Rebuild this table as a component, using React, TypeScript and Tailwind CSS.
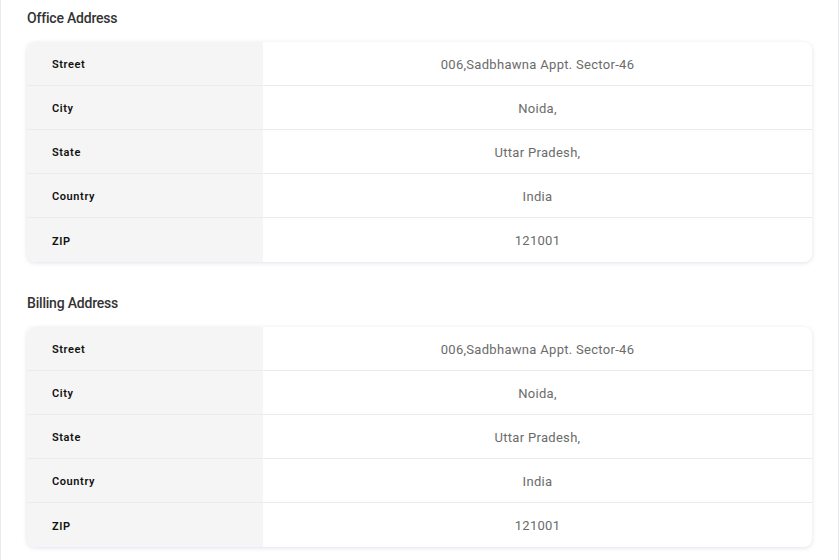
const rows = [
  { label: "Street", value: "006,Sadbhawna Appt. Sector-46" },
  { label: "City", value: "Noida," },
  { label: "State", value: "Uttar Pradesh," },
  { label: "Country", value: "India" },
  { label: "ZIP", value: "121001" },
]

function AddressCard({ title }: { title: string }) {
  return (
    <section>
      <h3 className="text-[14px] leading-5 font-medium text-[#333] tracking-[-0.2px] mb-[14px] pt-px">{title}</h3>
      <div className="rounded-lg overflow-hidden bg-white shadow-[0_1px_4px_rgba(120,120,170,0.22)]">
        {rows.map((r, i) => (
          <div key={r.label} className={`flex h-[44px] ${i < rows.length - 1 ? "border-b border-[#ebebef]" : ""}`}>
            <div className="w-[236px] shrink-0 bg-[#f5f5f5] flex items-center pl-[25px] pt-[4px] text-[11px] font-semibold text-[#111] tracking-[0.6px]">
              {r.label}
            </div>
            <div className="flex-1 flex items-center justify-center pt-[2px] text-[13px] text-[#6b6b6b] tracking-[0.3px]">
              {r.value}
            </div>
          </div>
        ))}
      </div>
    </section>
  )
}

export default function App() {
  return (
    <main className="w-[839px] h-[560px] bg-white border-x border-[#e8ecf2] px-[26px] pt-[7px] font-['Roboto',sans-serif] overflow-hidden">
      <div className="flex flex-col gap-[30px]">
        <AddressCard title="Office Address" />
        <AddressCard title="Billing Address" />
      </div>
    </main>
  )
}
